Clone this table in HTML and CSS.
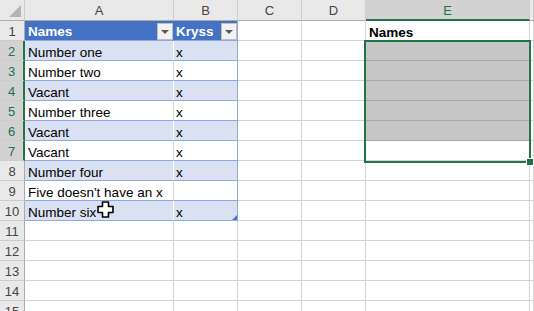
FILE: index.html
```html
<!DOCTYPE html>
<html>
<head>
    <title>Sheet1</title>
    <link rel="stylesheet" href="styles.css">
</head>
<body>
    <div class="sheet">
        <div class="row head">
            <div class="corner"><span class="tri"></span></div>
            <div class="ch a">A</div>
            <div class="ch b">B</div>
            <div class="ch c">C</div>
            <div class="ch d">D</div>
            <div class="ch e on">E</div>
            <div class="ch f"></div>
        </div>

        <div class="row">
            <div class="rh">1</div>
            <div class="cell a th">Names<span class="filter"></span></div>
            <div class="cell b th last">Kryss<span class="filter"></span></div>
            <div class="cell c"></div>
            <div class="cell d"></div>
            <div class="cell e bold">Names</div>
            <div class="cell f"></div>
        </div>
        <div class="row">
            <div class="rh on">2</div>
            <div class="cell a band">Number one</div>
            <div class="cell b band last">x</div>
            <div class="cell c"></div>
            <div class="cell d"></div>
            <div class="cell e grey"><div class="sel"></div></div>
            <div class="cell f"></div>
        </div>
        <div class="row">
            <div class="rh on">3</div>
            <div class="cell a plain">Number two</div>
            <div class="cell b plain last">x</div>
            <div class="cell c"></div>
            <div class="cell d"></div>
            <div class="cell e grey"></div>
            <div class="cell f"></div>
        </div>
        <div class="row">
            <div class="rh on">4</div>
            <div class="cell a band">Vacant</div>
            <div class="cell b band last">x</div>
            <div class="cell c"></div>
            <div class="cell d"></div>
            <div class="cell e grey"></div>
            <div class="cell f"></div>
        </div>
        <div class="row">
            <div class="rh on">5</div>
            <div class="cell a plain">Number three</div>
            <div class="cell b plain last">x</div>
            <div class="cell c"></div>
            <div class="cell d"></div>
            <div class="cell e grey"></div>
            <div class="cell f"></div>
        </div>
        <div class="row">
            <div class="rh on">6</div>
            <div class="cell a band">Vacant</div>
            <div class="cell b band last">x</div>
            <div class="cell c"></div>
            <div class="cell d"></div>
            <div class="cell e grey"></div>
            <div class="cell f"></div>
        </div>
        <div class="row">
            <div class="rh on">7</div>
            <div class="cell a plain">Vacant</div>
            <div class="cell b plain last">x</div>
            <div class="cell c"></div>
            <div class="cell d"></div>
            <div class="cell e"></div>
            <div class="cell f"></div>
        </div>
        <div class="row">
            <div class="rh">8</div>
            <div class="cell a band">Number four</div>
            <div class="cell b band last">x</div>
            <div class="cell c"></div>
            <div class="cell d"></div>
            <div class="cell e"></div>
            <div class="cell f"></div>
        </div>
        <div class="row">
            <div class="rh">9</div>
            <div class="cell a plain">Five doesn't have an x</div>
            <div class="cell b plain last"></div>
            <div class="cell c"></div>
            <div class="cell d"></div>
            <div class="cell e"></div>
            <div class="cell f"></div>
        </div>
        <div class="row">
            <div class="rh">10</div>
            <div class="cell a band cursor-cell">Number six
                <svg class="cursor" width="17" height="17" viewBox="0 0 17 17">
                    <polygon points="5.5,1 11.5,1 11.5,5.5 16,5.5 16,11.5 11.5,11.5 11.5,16 5.5,16 5.5,11.5 1,11.5 1,5.5 5.5,5.5" fill="#fff" stroke="#000" stroke-width="1.6" stroke-linejoin="round"/>
                </svg>
            </div>
            <div class="cell b band last end">x</div>
            <div class="cell c"></div>
            <div class="cell d"></div>
            <div class="cell e"></div>
            <div class="cell f"></div>
        </div>
        <div class="row">
            <div class="rh">11</div>
            <div class="cell a"></div><div class="cell b"></div><div class="cell c"></div><div class="cell d"></div><div class="cell e"></div><div class="cell f"></div>
        </div>
        <div class="row">
            <div class="rh">12</div>
            <div class="cell a"></div><div class="cell b"></div><div class="cell c"></div><div class="cell d"></div><div class="cell e"></div><div class="cell f"></div>
        </div>
        <div class="row">
            <div class="rh">13</div>
            <div class="cell a"></div><div class="cell b"></div><div class="cell c"></div><div class="cell d"></div><div class="cell e"></div><div class="cell f"></div>
        </div>
        <div class="row">
            <div class="rh">14</div>
            <div class="cell a"></div><div class="cell b"></div><div class="cell c"></div><div class="cell d"></div><div class="cell e"></div><div class="cell f"></div>
        </div>
        <div class="row">
            <div class="rh">15</div>
            <div class="cell a"></div><div class="cell b"></div><div class="cell c"></div><div class="cell d"></div><div class="cell e"></div><div class="cell f"></div>
        </div>
    </div>
</body>
</html>
```

FILE: styles.css
```css
body {
    margin: 0;
    background: #fff;
    font-family: "Liberation Sans", Arial, sans-serif;
    overflow: hidden;
}

.sheet {
    width: 534px;
    height: 311px;
    overflow: hidden;
}

.row {
    display: flex;
    height: 20px;
}

.row > div {
    box-sizing: border-box;
    flex-shrink: 0;
    height: 20px;
}

.a { width: 149px; }
.b, .c, .d { width: 64px; }
.e { width: 164px; }
.f { flex: 1; }

/* column headers */
.head {
    height: 21px;
}

.head > div {
    height: 21px;
    background: #e9e9e9;
    border-right: 1px solid #cdcdcd;
    border-bottom: 1px solid #ababab;
    color: #444;
    font-size: 13px;
    text-align: center;
    line-height: 21px;
}

.corner {
    width: 25px;
    position: relative;
}

.corner .tri {
    position: absolute;
    right: 3px;
    bottom: 3px;
    width: 0;
    height: 0;
    border-left: 12px solid transparent;
    border-bottom: 12px solid #b4b4b4;
}

.head .on {
    background: #d2d2d2;
    color: #217346;
    border-bottom: 2px solid #217346;
}

/* row headers */
.rh {
    width: 25px;
    background: #e9e9e9;
    border-right: 1px solid #ababab;
    border-bottom: 1px solid #cdcdcd;
    color: #444;
    font-size: 13px;
    text-align: center;
    line-height: 22px;
}

.rh.on {
    background: #d2d2d2;
    color: #217346;
    border-right: 2px solid #217346;
}

/* cells */
.cell {
    border-right: 1px solid #d4d4d4;
    border-bottom: 1px solid #d4d4d4;
    font-size: 13.5px;
    line-height: 23px;
    padding-left: 3px;
    color: #000;
    white-space: nowrap;
}

.cell.b {
    padding-left: 2px;
}

.th {
    display: flex;
    align-items: center;
    justify-content: space-between;
    background: #4472c4;
    color: #fff;
    font-weight: bold;
    border-right-color: #4472c4;
    border-bottom-color: #8ea9db;
    line-height: 19px;
    padding-top: 1px;
}

.th.last {
    border-right-color: #8ea9db;
}

.filter {
    position: relative;
    width: 16px;
    height: 17px;
    box-sizing: border-box;
    margin-right: 0;
    background: #f2f2f2;
    border: 1px solid #bfbfbf;
}

.filter::after {
    content: '';
    position: absolute;
    left: 3px;
    top: 6px;
    border-left: 4px solid transparent;
    border-right: 4px solid transparent;
    border-top: 4px solid #5a5a5a;
}

.band {
    background: #d9e1f2;
    border-right-color: #fff;
    border-bottom-color: #8ea9db;
}

.plain {
    border-bottom-color: #8ea9db;
}

.band.last, .plain.last {
    border-right-color: #8ea9db;
}

.end {
    position: relative;
}

.end::after {
    content: '';
    position: absolute;
    right: 0;
    bottom: 0;
    border-left: 5px solid transparent;
    border-bottom: 5px solid #4472c4;
}

.bold {
    font-weight: bold;
}

/* selection E2:E7 */
.grey {
    background: #c6c6c6;
    border-bottom-color: #a6a6a6;
}

.e:has(.sel) {
    position: relative;
}

.sel {
    position: absolute;
    left: -2px;
    top: -1px;
    width: 167px;
    height: 123px;
    box-sizing: border-box;
    border: 2px solid #217346;
    z-index: 2;
}

.sel::after {
    content: '';
    position: absolute;
    right: -5px;
    bottom: -5px;
    width: 6px;
    height: 6px;
    background: #217346;
    border: 1px solid #fff;
}

.cursor-cell {
    position: relative;
}

.cursor {
    position: absolute;
    left: 72px;
    top: 0px;
}
```
